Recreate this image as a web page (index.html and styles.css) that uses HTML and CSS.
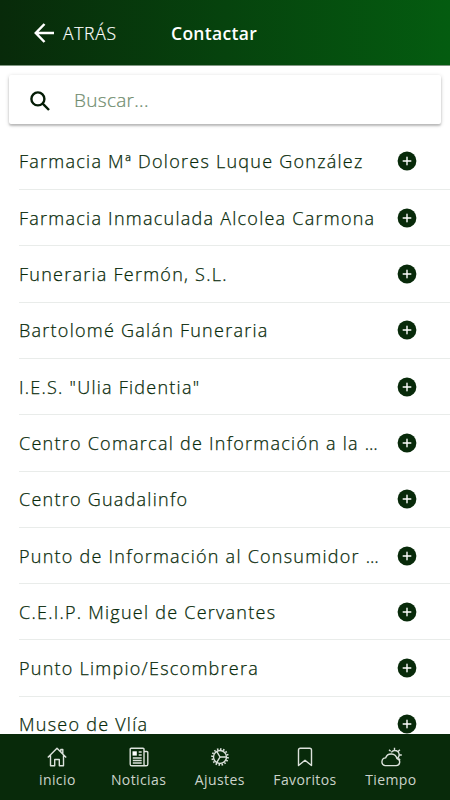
FILE: index.html
```
<!DOCTYPE html>
<html lang="es">
<head>
    <meta charset="UTF-8">
    <meta name="viewport" content="width=device-width, initial-scale=1.0">
    <title>Contactar</title>
    <link rel="stylesheet" href="styles.css">
</head>
<body>
    <svg class="sprite" aria-hidden="true">
        <symbol id="icon-add" viewBox="0 0 20 20">
            <circle cx="10" cy="10" r="9.4" fill="#082a0a"/>
            <path d="M10 6.2v7.6M6.2 10h7.6" fill="none" stroke="#fff" stroke-width="1.4" stroke-linecap="round"/>
        </symbol>
    </svg>

    <header class="header">
        <button class="back-button">
            <svg class="back-icon" viewBox="0 0 20 20">
                <path d="M10.5 1L1.8 10l8.7 9M2 10h18.5"/>
            </svg>
            <span>ATRÁS</span>
        </button>
        <h1 class="title">Contactar</h1>
    </header>

    <main class="content">
        <div class="searchbar">
            <svg class="search-icon" viewBox="0 0 20 20">
                <circle cx="7.9" cy="7.9" r="6.5"/>
                <path d="M12.7 12.7L19 19"/>
            </svg>
            <input class="search-input" type="text" placeholder="Buscar...">
        </div>

        <ul class="contact-list">
            <li><span>Farmacia Mª Dolores Luque González</span><svg><use href="#icon-add"/></svg></li>
            <li><span>Farmacia Inmaculada Alcolea Carmona</span><svg><use href="#icon-add"/></svg></li>
            <li><span>Funeraria Fermón, S.L.</span><svg><use href="#icon-add"/></svg></li>
            <li><span>Bartolomé Galán Funeraria</span><svg><use href="#icon-add"/></svg></li>
            <li><span>I.E.S. "Ulia Fidentia"</span><svg><use href="#icon-add"/></svg></li>
            <li><span>Centro Comarcal de Información a la …</span><svg><use href="#icon-add"/></svg></li>
            <li><span>Centro Guadalinfo</span><svg><use href="#icon-add"/></svg></li>
            <li><span>Punto de Información al Consumidor …</span><svg><use href="#icon-add"/></svg></li>
            <li><span>C.E.I.P. Miguel de Cervantes</span><svg><use href="#icon-add"/></svg></li>
            <li><span>Punto Limpio/Escombrera</span><svg><use href="#icon-add"/></svg></li>
            <li><span>Museo de Vlía</span><svg><use href="#icon-add"/></svg></li>
        </ul>
    </main>

    <nav class="tab-bar">
        <a class="tab">
            <svg viewBox="0 0 20 20">
                <path d="M.8 10.5L10 1.2l9.2 9.3M3.5 8.2v10.6h4.2v-6.3h4.6v6.3h4.2V8.2M13.8 4.8V2.5h2v4.3"/>
            </svg>
            <span>inicio</span>
        </a>
        <a class="tab">
            <svg viewBox="0 0 20 20">
                <path d="M15 17.2V2.3q0-1-1-1H2.2q-1 0-1 1v14.9q0 1.6 1.6 1.6h14.4q1.6 0 1.6-1.6V5.5q0-1-1-1H15M15 17.2q0 1.6 1.6 1.6M9.7 5h3M9.7 8h3M3.8 11h8.9M3.8 13.5h8.9M3.8 16h8.9"/>
                <path class="solid" d="M3.5 4.3h4.3v4.3H3.5z"/>
            </svg>
            <span>Noticias</span>
        </a>
        <a class="tab">
            <svg viewBox="0 0 20 20">
                <circle cx="10" cy="10" r="6.5"/>
                <circle class="teeth" cx="10" cy="10" r="7.9" pathLength="32"/>
                <path d="M10 10h6.5M10 10L6.7 4.4M10 10l-3.3 5.6"/>
            </svg>
            <span>Ajustes</span>
        </a>
        <a class="tab">
            <svg viewBox="0 0 20 20">
                <path d="M5.3 1.2h9.4q1.8 0 1.8 1.8v15.5L10 13.3l-6.5 5.2V3q0-1.8 1.8-1.8z"/>
            </svg>
            <span>Favoritos</span>
        </a>
        <a class="tab">
            <svg class="weather" viewBox="0 0 22 20">
                <path d="M5 18.6h11.2a3.6 3.6 0 0 0 .7-7.1 5.9 5.9 0 0 0-11.3-.6A3.9 3.9 0 0 0 5 18.6zM11.3 5.4a4.3 4.3 0 1 1 6.3 5.7M14.5 3V.8M18.3 4.3l1.6-1.6M19.6 8h2.2M18.6 11.6l1.5 1.4M10.6 4.2L9 2.7"/>
            </svg>
            <span>Tiempo</span>
        </a>
    </nav>
</body>
</html>
```

FILE: styles.css
```
* {
    margin: 0;
    padding: 0;
    box-sizing: border-box;
}

body {
    height: 100vh;
    display: flex;
    flex-direction: column;
    overflow: hidden;
    font-family: 'Open Sans', 'Noto Sans', sans-serif;
    background: #fff;
    color: #082a0a;
}

.sprite {
    display: none;
}

.header {
    flex: none;
    height: 66px;
    padding: 0 34px;
    display: flex;
    align-items: center;
    background: linear-gradient(90deg, #082a0a 0%, #045c10 100%);
    border-bottom: 1px solid #819783;
    color: #fff;
}

.back-button {
    width: 137px;
    display: flex;
    align-items: center;
    gap: 9px;
    background: none;
    border: none;
    color: #fff;
    font-family: inherit;
    font-size: 17.5px;
    font-weight: 300;
    letter-spacing: 0.7px;
    -webkit-text-stroke: 0.2px;
}

.back-icon {
    width: 20px;
    height: 20px;
    fill: none;
    stroke: #fff;
    stroke-width: 2.5;
}

.title {
    font-size: 17.5px;
    font-weight: 600;
    letter-spacing: 0.3px;
}

.content {
    flex: 1;
    min-height: 0;
    overflow: hidden;
}

.searchbar {
    height: 49px;
    margin: 9px 9px 0;
    padding: 0 21px;
    display: flex;
    align-items: center;
    gap: 24px;
    border-radius: 2px;
    background: #fff;
    box-shadow: 0 2px 2px rgba(0, 0, 0, 0.18), 0 1px 4px rgba(0, 0, 0, 0.18);
}

.search-icon {
    flex: none;
    width: 20px;
    height: 20px;
    margin-top: 3px;
    fill: none;
    stroke: #041c05;
    stroke-width: 2.4;
}

.search-input {
    flex: 1;
    min-width: 0;
    border: none;
    outline: none;
    background: none;
    font-family: inherit;
    font-size: 19px;
    font-weight: 300;
    letter-spacing: 0.3px;
    -webkit-text-stroke: 0.2px;
}

.search-input::placeholder {
    color: #6f8c6e;
    opacity: 1;
}

.contact-list {
    margin-top: 9.8px;
    padding-left: 19px;
    list-style: none;
}

.contact-list li {
    height: 56.3px;
    padding-right: 33px;
    display: flex;
    align-items: center;
    justify-content: space-between;
    gap: 14px;
    border-bottom: 1px solid #e9ecea;
}

.contact-list span {
    white-space: nowrap;
    font-size: 18px;
    font-weight: 300;
    letter-spacing: 1.25px;
    -webkit-text-stroke: 0.25px;
}

.contact-list svg {
    flex: none;
    width: 20px;
    height: 20px;
}

.tab-bar {
    flex: none;
    height: 66px;
    padding-right: 1px;
    display: flex;
    justify-content: center;
    gap: 28.5px;
    background: #082a0a;
    color: #cbd3cb;
}

.tab {
    min-width: 50px;
    padding-top: 13px;
    display: flex;
    flex-direction: column;
    align-items: center;
    gap: 3px;
    font-size: 14px;
    line-height: 20px;
    letter-spacing: 0.4px;
}

.tab svg {
    width: 20px;
    height: 20px;
    fill: none;
    stroke: #dce2dc;
    stroke-width: 1.4;
    stroke-linejoin: round;
}

.tab .weather {
    width: 22px;
}

.tab .solid {
    fill: #fff;
    stroke: none;
}

.tab .teeth {
    stroke-width: 1.8;
    stroke-dasharray: 1 1;
}
```
